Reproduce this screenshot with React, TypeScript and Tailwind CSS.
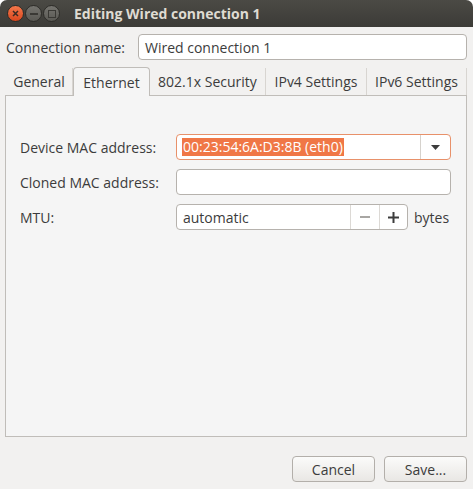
import React from "react";

const font = { fontFamily: '"Open Sans", "Noto Sans", sans-serif' };

function WinBtn({ kind }: { kind: "close" | "min" | "max" }) {
  if (kind === "close") {
    return (
      <div className="w-[17px] h-[17px] rounded-full bg-gradient-to-b from-[#f4774a] to-[#d9461c] border border-[#2e2d29] flex items-center justify-center">
        <svg width="7" height="7" viewBox="0 0 7 7">
          <path d="M1 1L6 6M6 1L1 6" stroke="#3c2a22" strokeWidth="1.5" />
        </svg>
      </div>
    );
  }
  return (
    <div className="w-[17px] h-[17px] rounded-full bg-gradient-to-b from-[#75746f] to-[#5a5954] border border-[#2e2d29] flex items-center justify-center">
      {kind === "min" ? (
        <div className="w-[8px] h-[2px] bg-[#3a3935]" />
      ) : (
        <div className="w-[8px] h-[8px] border-[1.5px] border-[#3a3935]" />
      )}
    </div>
  );
}

export default function App() {
  const tabs = [
    { label: "General", w: 67 },
    { label: "Ethernet", w: 77, active: true },
    { label: "802.1x Security", w: 116 },
    { label: "IPv4 Settings", w: 101 },
    { label: "IPv6 Settings", w: 100 },
  ];
  return (
    <div className="w-[473px] h-[489px] bg-white text-[#3c3c3c] text-[14px] overflow-hidden" style={font}>
      <div className="w-full h-full bg-[#f2f1f0] rounded-t-[7px] flex flex-col">
        <div className="h-[27px] rounded-t-[7px] bg-gradient-to-b from-[#4b4a45] to-[#3c3b37] flex items-center pl-[7px]">
          <div className="flex gap-[1px]">
            <WinBtn kind="close" />
            <WinBtn kind="min" />
            <WinBtn kind="max" />
          </div>
          <div className="ml-[14px] text-[#dfdbd2] font-bold text-[14px] leading-none">Editing Wired connection 1</div>
        </div>

        <div className="px-[5px] flex flex-col">
          <div className="flex items-center mt-[7px] h-[26px]">
            <div className="w-[133px] pl-[1px]">Connection name:</div>
            <div className="flex-1 h-[26px] bg-white border border-[#b6b2ad] rounded-[4px] flex items-center px-[6px] mr-[1px]">
              Wired connection 1
            </div>
          </div>

          <div className="mt-[7px] flex items-end h-[28px] pl-[1px]">
            {tabs.map((t) =>
              t.active ? (
                <div
                  key={t.label}
                  className="h-[29px] bg-[#f5f5f5] border border-b-0 border-[#c0bdb9] rounded-t-[4px] flex items-center justify-center -mb-[1px] relative z-10"
                  style={{ width: t.w }}
                >
                  {t.label}
                </div>
              ) : (
                <div
                  key={t.label}
                  className="h-[27px] flex items-center justify-center border-r border-[#d8d5d1]"
                  style={{ width: t.w }}
                >
                  {t.label}
                </div>
              )
            )}
          </div>

          <div className="h-[342px] bg-[#f5f5f5] border border-[#c0bdb9] mr-[1px] relative">
            <div className="pt-[38px] pl-[14px] pr-[15px] flex flex-col gap-[9px]">
              <div className="flex items-center h-[26px]">
                <div className="w-[156px]">Device MAC address:</div>
                <div className="flex-1 h-[26px] bg-white border border-[#e8916a] rounded-[4px] flex items-stretch">
                  <div className="flex-1 flex items-center pl-[5px]">
                    <span className="bg-[#f07746] text-white leading-[18px] px-[1px]">00:23:54:6A:D3:8B (eth0)</span>
                  </div>
                  <div className="w-[30px] border-l border-[#d6d2cd] flex items-center justify-center">
                    <svg width="9" height="5" viewBox="0 0 9 5">
                      <path d="M0 0H9L4.5 5Z" fill="#3c3c3c" />
                    </svg>
                  </div>
                </div>
              </div>
              <div className="flex items-center h-[26px]">
                <div className="w-[156px]">Cloned MAC address:</div>
                <div className="flex-1 h-[26px] bg-white border border-[#b6b2ad] rounded-[4px]" />
              </div>
              <div className="flex items-center h-[26px]">
                <div className="w-[156px]">MTU:</div>
                <div className="w-[232px] h-[26px] bg-white border border-[#b6b2ad] rounded-[4px] flex items-stretch">
                  <div className="flex-1 flex items-center pl-[6px]">automatic</div>
                  <div className="w-[29px] border-l border-[#dcd9d5] flex items-center justify-center">
                    <div className="w-[10px] h-[1.5px] bg-[#a8a6a3]" />
                  </div>
                  <div className="w-[28px] border-l border-[#dcd9d5] flex items-center justify-center">
                    <svg width="11" height="11" viewBox="0 0 11 11">
                      <path d="M5.5 0V11M0 5.5H11" stroke="#3c3c3c" strokeWidth="2" />
                    </svg>
                  </div>
                </div>
                <div className="ml-[6px]">bytes</div>
              </div>
            </div>
          </div>

          <div className="flex justify-end gap-[9px] mt-[19px] mr-[1px]">
            <div className="w-[83px] h-[26px] rounded-[4px] border border-[#b3afaa] bg-gradient-to-b from-[#fbfbfa] to-[#e9e7e4] flex items-center justify-center">
              Cancel
            </div>
            <div className="w-[83px] h-[26px] rounded-[4px] border border-[#b3afaa] bg-gradient-to-b from-[#fbfbfa] to-[#e9e7e4] flex items-center justify-center">
              Save...
            </div>
          </div>
        </div>
      </div>
    </div>
  );
}
